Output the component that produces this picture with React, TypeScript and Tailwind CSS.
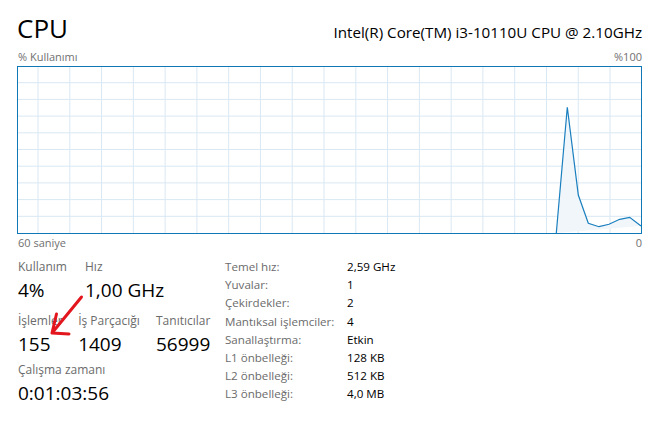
import React from "react";

const font = { fontFamily: '"Open Sans", "Noto Sans", sans-serif' };

const gridX = Array.from({ length: 19 }, (_, i) => 21 + i * 31.78);
const gridY = Array.from({ length: 9 }, (_, i) => 16.7 * (i + 1));

const points: [number, number][] = [
  [539.3, 167],
  [550.3, 41.3],
  [561.3, 129],
  [571.3, 157.3],
  [582, 160.7],
  [592, 158.3],
  [602.7, 153.3],
  [612.7, 151.3],
  [624, 160],
];

const specs = [
  ["Temel hız:", "2,59 GHz"],
  ["Yuvalar:", "1"],
  ["Çekirdekler:", "2"],
  ["Mantıksal işlemciler:", "4"],
  ["Sanallaştırma:", "Etkin"],
  ["L1 önbelleği:", "128 KB"],
  ["L2 önbelleği:", "512 KB"],
  ["L3 önbelleği:", "4,0 MB"],
];

const Chart = () => {
  const line = points.map((p) => p.join(",")).join(" ");
  const area = `${line} 539.3,167`;
  return (
    <svg width={625} height={168} className="block">
      {gridX.map((x) => (
        <line key={x} x1={x} y1={0} x2={x} y2={168} stroke="#d9e8f3" strokeWidth={1} />
      ))}
      {gridY.map((y) => (
        <line key={y} x1={0} y1={y} x2={625} y2={y} stroke="#d9e8f3" strokeWidth={1} />
      ))}
      <polygon points={area} fill="#f1f6fa" />
      <polyline points={line} fill="none" stroke="#1a7fbf" strokeWidth={1.2} />
      <rect x={0.5} y={0.5} width={624} height={167} fill="none" stroke="#1178b8" strokeWidth={1} />
    </svg>
  );
};

const Stat = ({ label, value, w }: { label: string; value: string; w: string }) => (
  <div className={w}>
    <div className="text-[12px] leading-[20px] text-[#6b6b6b]">{label}</div>
    <div className="text-[19px] leading-[26px] text-black">{value}</div>
  </div>
);

export default function App() {
  return (
    <div className="relative w-[661px] h-[424px] bg-white overflow-hidden" style={font}>
      <div className="flex items-baseline justify-between pl-[17px] pr-[19px] pt-[10px]">
        <span className="text-[26px] leading-[36px] text-black">CPU</span>
        <span className="text-[15.2px] text-black">Intel(R) Core(TM) i3-10110U CPU @ 2.10GHz</span>
      </div>

      <div className="flex justify-between pl-[18px] pr-[19px] mt-[3px] text-[11px] leading-[15px] text-[#707070]">
        <span>% Kullanımı</span>
        <span>%100</span>
      </div>

      <div className="pl-[17px] mt-[2px]">
        <Chart />
      </div>

      <div className="flex justify-between pl-[18px] pr-[19px] mt-[1px] text-[11px] leading-[15px] text-[#707070]">
        <span>60 saniye</span>
        <span>0</span>
      </div>

      <div className="flex pl-[18px] mt-[7px]">
        <div className="w-[207px]">
          <div className="flex">
            <Stat w="w-[67px]" label="Kullanım" value="4%" />
            <Stat w="w-[120px]" label="Hız" value="1,00 GHz" />
          </div>
          <div className="flex mt-[8px]">
            <Stat w="w-[61px]" label="İşlemler" value="155" />
            <Stat w="w-[79px]" label="İş Parçacığı" value="1409" />
            <Stat w="w-[70px]" label="Tanıtıcılar" value="56999" />
          </div>
          <div className="mt-[3px]">
            <Stat w="w-[150px]" label="Çalışma zamanı" value="0:01:03:56" />
          </div>
        </div>

        <div className="text-[11.6px] leading-[18.2px] pt-[1px]">
          {specs.map(([k, v]) => (
            <div key={k} className="flex">
              <span className="w-[122px] text-[#6b6b6b]">{k}</span>
              <span className="text-black">{v}</span>
            </div>
          ))}
        </div>
      </div>

      <svg className="absolute left-0 top-0 pointer-events-none" width={661} height={424}>
        <path
          d="M81.5 297 L52 333 M56.5 314 L52 333 L69 334"
          fill="none"
          stroke="#e3161d"
          strokeWidth={3}
          strokeLinecap="round"
          strokeLinejoin="round"
        />
      </svg>
    </div>
  );
}
